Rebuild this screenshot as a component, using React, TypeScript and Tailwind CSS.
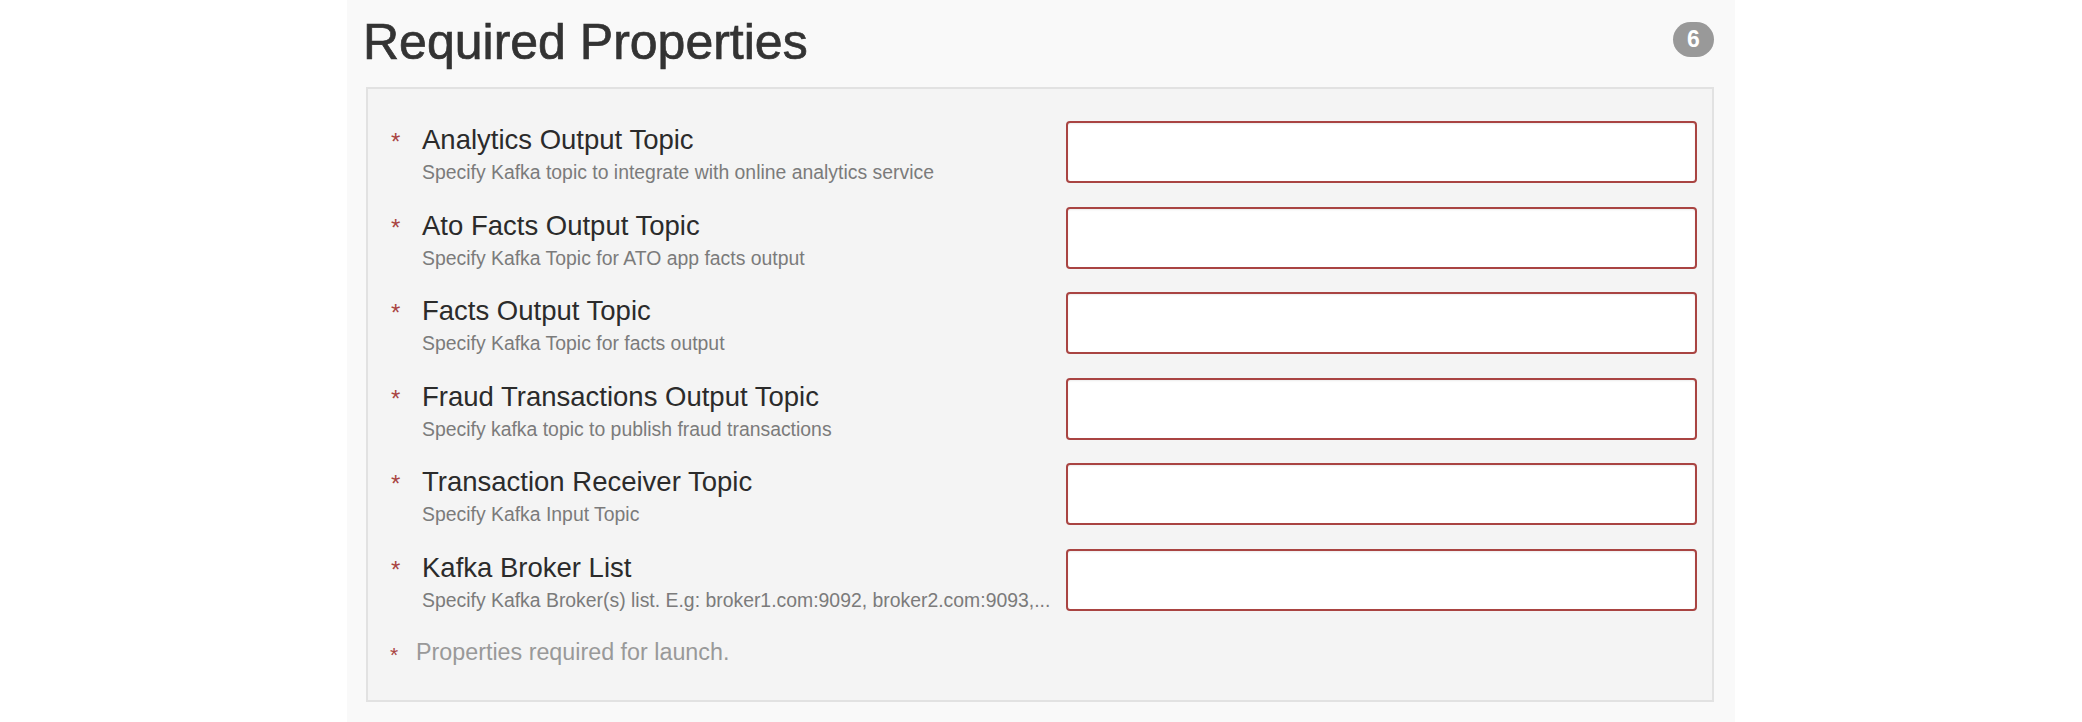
const properties = [
  {
    label: "Analytics Output Topic",
    help: "Specify Kafka topic to integrate with online analytics service",
  },
  {
    label: "Ato Facts Output Topic",
    help: "Specify Kafka Topic for ATO app facts output",
  },
  {
    label: "Facts Output Topic",
    help: "Specify Kafka Topic for facts output",
  },
  {
    label: "Fraud Transactions Output Topic",
    help: "Specify kafka topic to publish fraud transactions",
  },
  {
    label: "Transaction Receiver Topic",
    help: "Specify Kafka Input Topic",
  },
  {
    label: "Kafka Broker List",
    help: "Specify Kafka Broker(s) list. E.g: broker1.com:9092, broker2.com:9093,...",
  },
];

function PropertyRow({ label, help }: { label: string; help: string }) {
  return (
    <div className="flex h-[62px] items-start">
      <span className="mt-[9px] w-[31px] shrink-0 text-[24px] leading-[24px] text-[#a94442]">
        *
      </span>
      <div className="min-w-0 flex-1 pr-[16px]">
        <div className="mt-[3px] text-[27.5px] leading-[32px] text-[#2b2b2b]">
          {label}
        </div>
        <div className="mt-[4px] whitespace-nowrap text-[19.4px] leading-[24px] text-[#7b7b7b]">
          {help}
        </div>
      </div>
      <input
        type="text"
        className="h-[62px] w-[631px] shrink-0 rounded-[4px] border-2 border-[#a94442] bg-white shadow-[inset_0_1px_2px_rgba(0,0,0,0.08)] outline-none"
      />
    </div>
  );
}

export default function App() {
  return (
    <div
      className="min-h-[722px] w-full bg-white"
      style={{ fontFamily: '"Liberation Sans", Arial, sans-serif' }}
    >
      <div className="ml-[347px] min-h-[722px] w-[1388px] bg-[#f9f9f9] pl-[19px] pr-[21px] pt-[14px]">
        <div className="flex items-start justify-between">
          <h1 className="-ml-[3px] text-[50px] leading-[56px] text-[#333] [-webkit-text-stroke:0.7px_#333]">
            Required Properties
          </h1>
          <span className="mt-[8px] flex h-[35px] w-[41px] items-center justify-center rounded-full bg-[#999] text-[23px] font-bold text-white">
            6
          </span>
        </div>

        <div className="mt-[17px] border-2 border-[#e2e2e2] bg-[#f4f4f4] pb-[34px] pl-[23px] pr-[15px] pt-[32px]">
          <div className="flex flex-col gap-[23.5px]">
            {properties.map((p) => (
              <PropertyRow key={p.label} label={p.label} help={p.help} />
            ))}
          </div>

          <div className="mt-[27px] flex items-start">
            <span className="mt-[6px] w-[25px] shrink-0 -translate-x-[1px] text-[21px] leading-[21px] text-[#a94442]">
              *
            </span>
            <span className="text-[23.3px] leading-[28px] text-[#999]">
              Properties required for launch.
            </span>
          </div>
        </div>
      </div>
    </div>
  );
}
